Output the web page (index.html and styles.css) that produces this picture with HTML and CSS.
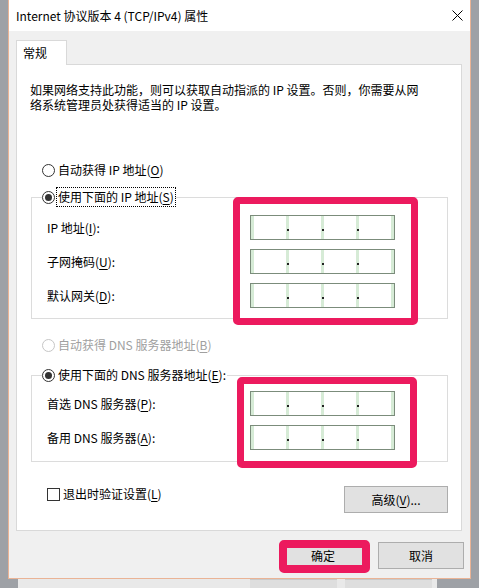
FILE: index.html
```html
<!DOCTYPE html>
<html lang="zh-CN">
<head>
    <meta charset="UTF-8">
    <title>Internet 协议版本 4 (TCP/IPv4) 属性</title>
    <link rel="stylesheet" href="styles.css">
</head>
<body>

    <div class="dialog">
        <div class="titlebar">
            <span class="title">Internet 协议版本 4 (TCP/IPv4) 属性</span>
            <svg class="close" width="11" height="11" viewBox="0 0 11 11">
                <path d="M0.5 0.5L10.5 10.5M10.5 0.5L0.5 10.5" stroke="#000" stroke-width="1" fill="none"/>
            </svg>
        </div>

        <div class="client">
            <div class="tabs">
                <div class="tab">常规</div>
            </div>

            <div class="panel">
                <p class="intro">如果网络支持此功能，则可以获取自动指派的 IP 设置。否则，你需要从网<br>络系统管理员处获得适当的 IP 设置。</p>

                <div class="opt opt-auto-ip"><span class="radio"></span><span class="opt-text">自动获得 IP 地址(<u>O</u>)</span></div>

                <fieldset class="group group-ip">
                    <legend class="opt"><span class="radio on"></span><span class="opt-text focus">使用下面的 IP 地址(<u>S</u>)</span></legend>
                    <div class="rows">
                        <label>IP 地址(<u>I</u>):</label>
                        <div class="ip"><span class="seg"></span><span class="seg dot"></span><span class="seg dot"></span><span class="seg dot last"></span></div>
                        <label>子网掩码(<u>U</u>):</label>
                        <div class="ip"><span class="seg"></span><span class="seg dot"></span><span class="seg dot"></span><span class="seg dot last"></span></div>
                        <label>默认网关(<u>D</u>):</label>
                        <div class="ip"><span class="seg"></span><span class="seg dot"></span><span class="seg dot"></span><span class="seg dot last"></span></div>
                    </div>
                </fieldset>

                <div class="opt opt-auto-dns disabled"><span class="radio"></span><span class="opt-text">自动获得 DNS 服务器地址(<u>B</u>)</span></div>

                <fieldset class="group group-dns">
                    <legend class="opt"><span class="radio on"></span><span class="opt-text">使用下面的 DNS 服务器地址(<u>E</u>):</span></legend>
                    <div class="rows">
                        <label>首选 DNS 服务器(<u>P</u>):</label>
                        <div class="ip"><span class="seg"></span><span class="seg dot"></span><span class="seg dot"></span><span class="seg dot last"></span></div>
                        <label>备用 DNS 服务器(<u>A</u>):</label>
                        <div class="ip"><span class="seg"></span><span class="seg dot"></span><span class="seg dot"></span><span class="seg dot last"></span></div>
                    </div>
                </fieldset>

                <div class="bottom-row">
                    <div class="check-row"><span class="checkbox"></span><span>退出时验证设置(<u>L</u>)</span></div>
                    <button class="btn btn-adv">高级(<u>V</u>)...</button>
                </div>
            </div>

            <div class="footer">
                <button class="btn btn-ok">确定</button>
                <button class="btn">取消</button>
            </div>
        </div>

        <!-- красные рамки поверх скриншота -->
        <div class="mark mark-ip"></div>
        <div class="mark mark-dns"></div>
        <div class="mark mark-ok"></div>
    </div>

    <div class="backdrop">
        <span class="back-btn"></span>
        <span class="back-btn"></span>
    </div>

</body>
</html>
```

FILE: styles.css
```css
body {
    margin: 0;
    height: 588px;
    overflow: hidden;
    background-color: #9ea1a6;
    font-family: "Noto Sans CJK SC", "Noto Sans", sans-serif;
    font-size: 12px;
    color: #000;
}
u {
    text-decoration: underline;
    text-underline-offset: 2px;
}

/* Окно диалога */
.dialog {
    position: relative;
    margin-left: 8px;
    width: 463px;
    box-sizing: border-box;
    border: 1px solid #eab395;
    border-top: 0;
    background-color: #f0f0f0;
}
.titlebar {
    display: flex;
    justify-content: space-between;
    align-items: center;
    height: 31px;
    padding: 0 7px;
    background-color: #fff;
}
.title {
    line-height: 31px;
}
.close {
    display: block;
}

.client {
    padding: 9px 8px 9px 7px;
}
.tabs {
    display: flex;
}
.tab {
    position: relative;
    z-index: 1;
    box-sizing: border-box;
    width: 51px;
    height: 25px;
    margin-bottom: -1px;
    padding-left: 6px;
    line-height: 24px;
    background-color: #fff;
    border: 1px solid #d9d9d9;
    border-bottom: 0;
}
.panel {
    background-color: #fff;
    border: 1px solid #d9d9d9;
    padding-bottom: 17px;
}
.intro {
    margin: 17px 0 0 13px;
    line-height: 15px;
}

/* Радио-кнопки */
.opt {
    display: flex;
    align-items: center;
    height: 20px;
}
.opt-auto-ip {
    margin: 48px 0 0 25px;
}
.opt-auto-dns {
    margin: 16px 0 0 25px;
}
.radio {
    box-sizing: border-box;
    width: 13px;
    height: 13px;
    border: 1px solid #333;
    border-radius: 50%;
    background-color: #fff;
    display: flex;
    align-items: center;
    justify-content: center;
}
.radio.on::after {
    content: "";
    width: 7px;
    height: 7px;
    border-radius: 50%;
    background-color: #333;
}
.opt-text {
    margin-left: 2px;
    padding: 0 1px;
    line-height: 18px;
}
.focus {
    outline: 1px dotted #000;
}
.disabled {
    color: #a0a0a0;
}
.disabled .radio {
    border-color: #c6c6c6;
}

/* Групповые рамки */
.group {
    margin: 7px 13px 0 14px;
    padding: 0;
    min-width: 0;
    border: 1px solid #dcdcdc;
}
.group legend {
    margin-left: 10px;
    padding: 0;
}
.group-dns {
    margin-top: 10px;
}
.rows {
    display: grid;
    grid-template-columns: 203px 145px;
    row-gap: 9px;
    align-items: center;
    padding: 8px 0 10px 15px;
}
.group-dns .rows {
    padding: 6px 0 11px 15px;
}

/* Поле IP-адреса */
.ip {
    display: flex;
    box-sizing: border-box;
    width: 145px;
    height: 25px;
    border: 1px solid #7b8c7b;
    background-color: #fff;
}
.seg {
    position: relative;
    flex: 1;
    border-left: 3px solid #d6ebd6;
}
.seg.last {
    border-right: 3px solid #d6ebd6;
}
.seg.dot::before {
    content: "";
    position: absolute;
    left: -2px;
    top: 13px;
    width: 2px;
    height: 2px;
    background-color: #222;
}

/* Нижняя строка панели */
.bottom-row {
    display: flex;
    justify-content: space-between;
    margin: 24px 13px 0 30px;
}
.check-row {
    display: flex;
    align-items: flex-start;
    line-height: 16px;
}
.checkbox {
    box-sizing: border-box;
    width: 13px;
    height: 13px;
    margin: 2px 3px 0 0;
    border: 1px solid #333;
    background-color: #fff;
}
.btn {
    box-sizing: border-box;
    width: 86px;
    height: 27px;
    padding: 0;
    font-family: inherit;
    font-size: 12px;
    color: #000;
    background-color: #e1e1e1;
    border: 1px solid #adadad;
}
.btn-adv {
    width: 104px;
}
.btn-ok {
    border-color: #0078d7;
}
.footer {
    display: flex;
    justify-content: flex-end;
    gap: 12px;
    margin: 11px -2px 0 0;
}

/* Розовые выделения */
.mark {
    position: absolute;
    box-sizing: border-box;
    border: 7px solid #ec1a5e;
    border-radius: 5px;
}
.mark-ip {
    left: 224px;
    top: 197px;
    width: 185px;
    height: 128px;
}
.mark-dns {
    left: 228px;
    top: 377px;
    width: 180px;
    height: 91px;
}
.mark-ok {
    left: 270px;
    top: 540px;
    width: 91px;
    height: 33px;
    border-width: 8px 8px 8px 8px;
}

/* Окно позади */
.backdrop {
    display: flex;
    gap: 8px;
    margin-left: 18px;
    padding-left: 232px;
    width: 187px;
    height: 9px;
    background-color: #e9e9e9;
}
.back-btn {
    width: 87px;
    border-top: 1px solid #c9c9c9;
    background-color: #dedede;
}
```
